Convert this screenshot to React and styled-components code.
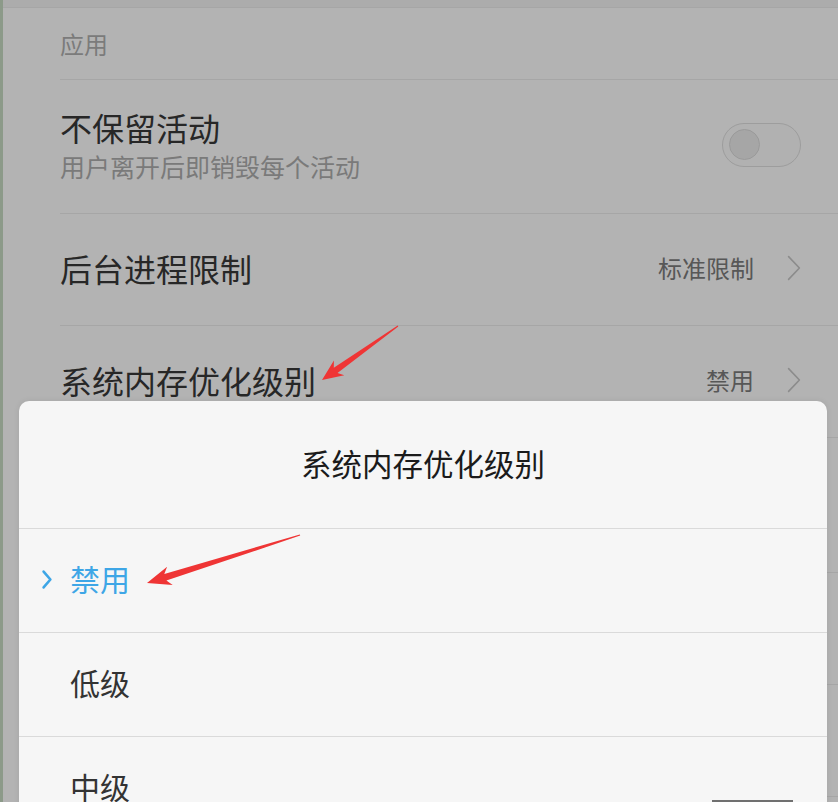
import React from 'react';
import styled, {createGlobalStyle} from 'styled-components';

const GlobalStyle = createGlobalStyle`
  html, body {
    margin: 0;
    padding: 0;
    background: #b3b3b3;
  }
  * {
    box-sizing: border-box;
  }
`;

const font = `'Noto Sans CJK SC', 'Noto Sans', sans-serif`;

const options = [
  {label: '禁用', selected: true},
  {label: '低级'},
  {label: '中级'}
];

// computes an arrow shape (thin tail, wider near head) from tail to tip
const arrowPoints = (tail, tip, headLen, headHalf, neckHalf) => {
  const dx = tip[0] - tail[0];
  const dy = tip[1] - tail[1];
  const len = Math.hypot(dx, dy);
  const ux = dx / len;
  const uy = dy / len;
  const nx = -uy;
  const ny = ux;
  const bx = tip[0] - ux * headLen;
  const by = tip[1] - uy * headLen;
  const nbx = tip[0] - ux * headLen * 0.8;
  const nby = tip[1] - uy * headLen * 0.8;
  const pts = [
    [tail[0] + nx * 0.6, tail[1] + ny * 0.6],
    [nbx + nx * neckHalf, nby + ny * neckHalf],
    [bx + nx * headHalf, by + ny * headHalf],
    tip,
    [bx - nx * headHalf, by - ny * headHalf],
    [nbx - nx * neckHalf, nby - ny * neckHalf],
    [tail[0] - nx * 0.6, tail[1] - ny * 0.6]
  ];
  return pts.map(p => `${p[0].toFixed(1)},${p[1].toFixed(1)}`).join(' ');
};

const Chevron = ({color = '#8c8c8c', width = 14, height = 26, stroke = 1.6}) => (
  <svg width={width} height={height} viewBox={`0 0 ${width} ${height}`}>
    <polyline
      points={`${stroke},${stroke} ${width - stroke},${height / 2} ${stroke},${height - stroke}`}
      fill="none"
      stroke={color}
      strokeWidth={stroke}
      strokeLinecap="round"
      strokeLinejoin="round"
    />
  </svg>
);

export default function App() {
  return (
    <>
      <GlobalStyle />
      <Screen>
        <TopBand />
        <List>
          <SectionHeader>应用</SectionHeader>
          <Row height={134}>
            <TextBlock>
              <Title>不保留活动</Title>
              <Subtitle>用户离开后即销毁每个活动</Subtitle>
            </TextBlock>
            <Toggle>
              <Knob />
            </Toggle>
          </Row>
          <Row height={112}>
            <Title>后台进程限制</Title>
            <Value>
              标准限制
              <Chevron />
            </Value>
          </Row>
          <Row height={112}>
            <Title>系统内存优化级别</Title>
            <Value>
              禁用
              <Chevron />
            </Value>
          </Row>
          <Row height={135} />
          <Row height={112} />
          <Row height={112} />
        </List>

        <Dialog>
          <DialogTitle>系统内存优化级别</DialogTitle>
          {options.map(opt => (
            <Option key={opt.label} selected={opt.selected}>
              <Marker>
                {opt.selected && <Chevron color="#3ea6e6" width={12} height={21} stroke={2.6} />}
              </Marker>
              {opt.label}
            </Option>
          ))}
        </Dialog>

        <NavHandle />

        <Arrows width="838" height="802" viewBox="0 0 838 802">
          <polygon points={arrowPoints([398, 326], [322, 380], 21, 9, 3.2)} fill="#ef3535" />
          <polygon points={arrowPoints([300, 535], [147, 583], 24, 9.5, 3.5)} fill="#ef3535" />
        </Arrows>
      </Screen>
    </>
  );
}

const Screen = styled.div`
  position: relative;
  width: 838px;
  height: 802px;
  overflow: hidden;
  background: #b3b3b3;
  border-left: 3px solid #8c9a89;
  font-family: ${font};
`;

const TopBand = styled.div`
  height: 8px;
  background: #acacac;
  border-bottom: 1px solid #a6a6a6;
`;

const List = styled.div`
  display: flex;
  flex-direction: column;
  padding-left: 57px;
  margin-top: -1px;
`;

const SectionHeader = styled.div`
  height: 73px;
  display: flex;
  align-items: center;
  padding-top: 1px;
  font-size: 24px;
  color: #7b7b7b;
  border-bottom: 1px solid #a6a6a6;
`;

const Row = styled.div`
  height: ${({height}) => height}px;
  display: flex;
  align-items: center;
  justify-content: space-between;
  padding-right: 37px;
  padding-bottom: 4px;
  border-bottom: 1px solid #a6a6a6;
`;

const TextBlock = styled.div`
  display: flex;
  flex-direction: column;
  gap: 5px;
`;

const Title = styled.div`
  font-size: 32px;
  line-height: 38px;
  color: #272727;
`;

const Subtitle = styled.div`
  font-size: 25px;
  line-height: 30px;
  color: #7a7a7a;
`;

const Value = styled.div`
  display: flex;
  align-items: center;
  gap: 33px;
  font-size: 24px;
  color: #575757;
`;

const Toggle = styled.div`
  width: 79px;
  height: 44px;
  border-radius: 22px;
  border: 1.5px solid #9d9d9d;
  background: #b1b1b1;
  display: flex;
  align-items: center;
  padding-left: 6px;
`;

const Knob = styled.div`
  width: 31px;
  height: 31px;
  border-radius: 50%;
  background: #a6a6a6;
  border: 1.5px solid #9a9a9a;
`;

const Dialog = styled.div`
  position: absolute;
  top: 401px;
  left: 16px;
  width: 808px;
  height: 420px;
  background: #f6f6f6;
  border-radius: 10px 10px 0 0;
  box-shadow: 0 0 6px rgba(0, 0, 0, 0.08);
`;

const DialogTitle = styled.div`
  height: 127px;
  display: flex;
  align-items: center;
  justify-content: center;
  padding-bottom: 4px;
  font-size: 30.5px;
  color: #1b1b1b;
`;

const Option = styled.div`
  height: 104px;
  display: flex;
  align-items: center;
  padding-left: 22px;
  padding-bottom: 6px;
  border-top: 1px solid #dadada;
  font-size: 30px;
  color: ${({selected}) => selected ? '#3ea6e6' : '#333333'};
`;

const Marker = styled.div`
  width: 29px;
  display: flex;
  align-items: center;
  padding-top: 4px;
`;

const NavHandle = styled.div`
  position: absolute;
  left: 709px;
  bottom: 0;
  width: 81px;
  height: 2px;
  background: #707070;
`;

const Arrows = styled.svg`
  position: absolute;
  top: 0;
  left: -3px;
  pointer-events: none;
`;
